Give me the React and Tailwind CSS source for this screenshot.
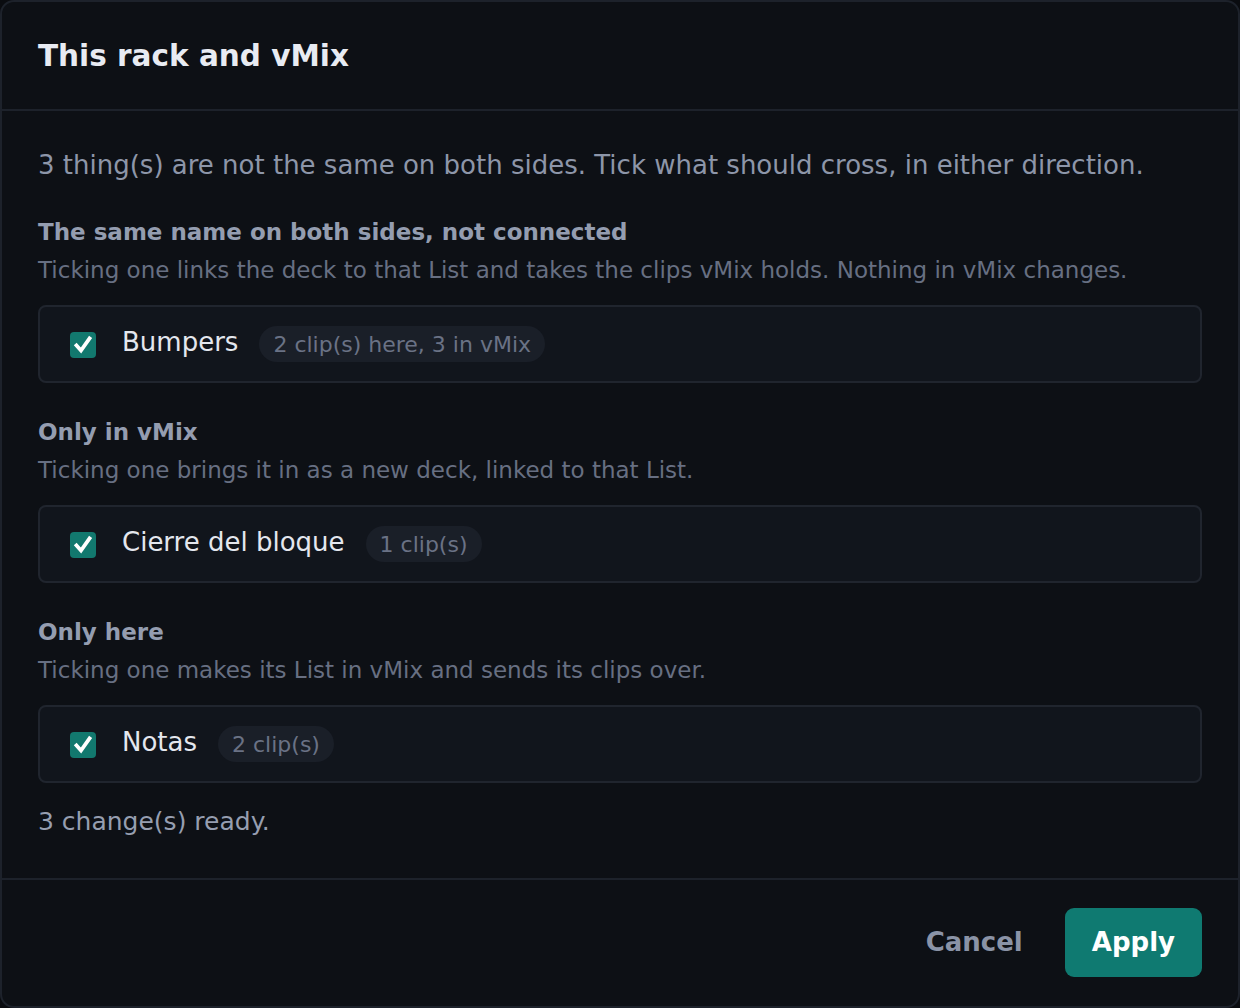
import React, { useState } from 'react';

const SECTIONS = [
    {
        title: 'The same name on both sides, not connected',
        desc: 'Ticking one links the deck to that List and takes the clips vMix holds. Nothing in vMix changes.',
        items: [{ id: 'bumpers', name: 'Bumpers', note: '2 clip(s) here, 3 in vMix' }],
    },
    {
        title: 'Only in vMix',
        desc: 'Ticking one brings it in as a new deck, linked to that List.',
        items: [{ id: 'cierre', name: 'Cierre del bloque', note: '1 clip(s)' }],
    },
    {
        title: 'Only here',
        desc: 'Ticking one makes its List in vMix and sends its clips over.',
        items: [{ id: 'notas', name: 'Notas', note: '2 clip(s)' }],
    },
];

// checkbox teal con la marca blanca
const Tick = ({ checked, onClick }) => (
    <button
        onClick={onClick}
        className={`w-[26px] h-[26px] rounded-[4px] flex items-center justify-center shrink-0 mt-[2px] ${
            checked ? 'bg-[#12786e]' : 'border-2 border-[#3a404c] bg-transparent'
        }`}
    >
        {checked && (
            <svg width="26" height="26" viewBox="0 0 26 26" fill="none">
                <path d="M6.5 13.5 L11 18.5 L19.5 6.5" stroke="#fff" strokeWidth="3.8" strokeLinecap="square" strokeLinejoin="miter" />
            </svg>
        )}
    </button>
);

const Row = ({ item, checked, onToggle }) => (
    <div className="h-[78px] rounded-[8px] border-2 border-[#20252e] bg-[#11151c] flex items-center pl-[30px]">
        <Tick checked={checked} onClick={onToggle} />
        <span className="ml-[26px] mb-[4px] text-[26px] text-[#e4e7ee] leading-none">{item.name}</span>
        <span className="ml-[21px] h-[36px] px-[14px] rounded-full bg-[#1a1f28] text-[22px] text-[#6a7285] flex items-center">
            {item.note}
        </span>
    </div>
);

export default function App() {
    const [picked, setPicked] = useState({ bumpers: true, cierre: true, notas: true });
    const count = Object.values(picked).filter(Boolean).length;

    return (
        <div className="bg-[#0a0c10]" style={{ fontFamily: '"DejaVu Sans", Verdana, sans-serif' }}>
            <div className="h-[1008px] flex flex-col bg-[#0d1015] border-2 border-[#1d222b] rounded-[14px] overflow-hidden">
                {/* header */}
                <div className="h-[109px] shrink-0 flex items-center px-[36px] pt-[2px] border-b-2 border-[#1d222b]">
                    <h2 className="text-[29.5px] font-bold text-[#e8ebf2]">This rack and vMix</h2>
                </div>

                {/* body */}
                <div className="flex-1 px-[36px] pt-[35px]">
                    <p className="text-[26px] leading-[38px] text-[#8d96a9]">
                        3 thing(s) are not the same on both sides. Tick what should cross, in either direction.
                    </p>

                    {SECTIONS.map((s, i) => (
                        <div key={s.title} className={i === 0 ? 'mt-[32px]' : 'mt-[33px]'}>
                            <h3 className="text-[23px] leading-[32px] font-bold text-[#949db0]">{s.title}</h3>
                            <p className="mt-[3px] text-[23px] leading-[38px] text-[#676f82]">{s.desc}</p>
                            <div className="mt-[16px] flex flex-col gap-3">
                                {s.items.map((it) => (
                                    <Row
                                        key={it.id}
                                        item={it}
                                        checked={picked[it.id]}
                                        onToggle={() => setPicked({ ...picked, [it.id]: !picked[it.id] })}
                                    />
                                ))}
                            </div>
                        </div>
                    ))}

                    <p className="mt-[20px] text-[25px] leading-[38px] text-[#969eb0]">{count} change(s) ready.</p>
                </div>

                {/* footer */}
                <div className="shrink-0 border-t-2 border-[#1d222b] px-[36px] pt-[28px] pb-[29px] flex justify-end gap-[15px]">
                    <button className="h-[69px] px-[27px] text-[26px] font-bold text-[#8a93a6] rounded-[9px]">Cancel</button>
                    <button className="h-[69px] px-[27px] text-[26px] font-bold text-white bg-[#0f7a71] rounded-[9px]">Apply</button>
                </div>
            </div>
        </div>
    );
}
